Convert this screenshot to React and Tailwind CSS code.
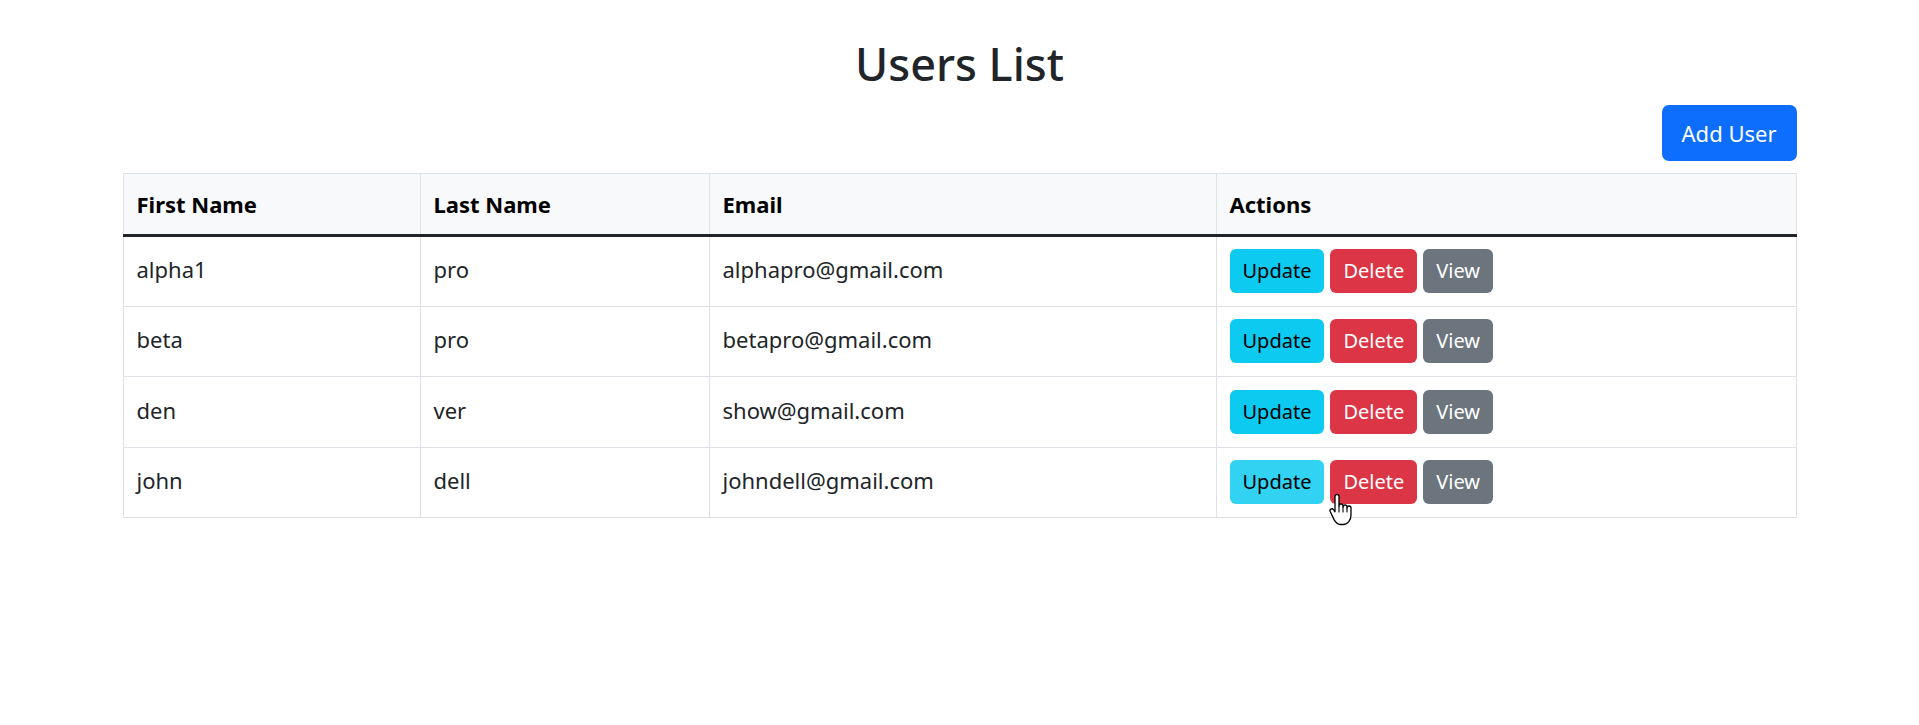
import React from 'react';

const users = [
  { first: 'alpha1', last: 'pro', email: 'alphapro@gmail.com' },
  { first: 'beta', last: 'pro', email: 'betapro@gmail.com' },
  { first: 'den', last: 'ver', email: 'show@gmail.com' },
  { first: 'john', last: 'dell', email: 'johndell@gmail.com' },
];

// the mouse pointer that sits over the last row's Delete button
const HandCursor = () => (
  <svg
    className="absolute left-[-3px] top-[33px] pointer-events-none"
    width="28"
    height="34"
    viewBox="0 0 28 34"
  >
    <path
      d="M10 1.5a2 2 0 0 1 2 2v9.5a2 2 0 0 1 4 0v1a2 2 0 0 1 4 0v1a2 2 0 0 1 4 0v7c0 5-3 9.5-8 9.5h-2.5c-3.2 0-4.8-2-6.3-4.6L3.3 18.8a1.9 1.9 0 0 1 3.2-2.1L8 18.8V3.5a2 2 0 0 1 2-2z"
      fill="white"
      stroke="black"
      strokeWidth="1.3"
      strokeLinejoin="round"
    />
    <path d="M12 13v6M16 14v5M20 15v4" stroke="black" strokeWidth="1.1" strokeLinecap="round" />
  </svg>
);

const Users = () => {
  return (
    <div className="min-h-screen bg-white font-['Noto_Sans',sans-serif] text-[#212529]">
      <div className="w-[1674px] mx-auto pt-[36px]">
        <h2 className="text-center text-[45px] leading-[55px] font-medium text-[#212529]">
          Users List
        </h2>

        <div className="flex justify-end mt-[14px] mb-[12px]">
          <button className="h-[56px] px-[20px] rounded-[7px] bg-[#0d6efd] text-white text-[22px] leading-none">
            Add User
          </button>
        </div>

        <table className="w-full table-fixed border-collapse border border-[#dee2e6]">
          <thead>
            <tr className="bg-[#f8f9fa] h-[62px]">
              <th className="w-[297px] border border-[#dee2e6] border-b-[3px] border-b-[#212529] px-[13px] text-left align-middle text-[22px] font-bold text-black">
                First Name
              </th>
              <th className="w-[289px] border border-[#dee2e6] border-b-[3px] border-b-[#212529] px-[13px] text-left align-middle text-[22px] font-bold text-black">
                Last Name
              </th>
              <th className="w-[507px] border border-[#dee2e6] border-b-[3px] border-b-[#212529] px-[13px] text-left align-middle text-[22px] font-bold text-black">
                Email
              </th>
              <th className="border border-[#dee2e6] border-b-[3px] border-b-[#212529] px-[13px] text-left align-middle text-[22px] font-bold text-black">
                Actions
              </th>
            </tr>
          </thead>
          <tbody>
            {users.map((u, i) => {
              const isLast = i === users.length - 1;
              return (
                <tr key={u.email} className="h-[70.5px]">
                  <td className="border border-[#dee2e6] px-[13px] align-middle text-[22px] pb-[3px]">{u.first}</td>
                  <td className="border border-[#dee2e6] px-[13px] align-middle text-[22px] pb-[3px]">{u.last}</td>
                  <td className="border border-[#dee2e6] px-[13px] align-middle text-[22px] pb-[3px]">{u.email}</td>
                  <td className="border border-[#dee2e6] px-[13px] align-middle">
                    <div className="flex items-center gap-[6px]">
                      <button
                        className={
                          isLast
                            ? 'h-[44px] px-[13px] rounded-[6px] bg-[#31d2f2] text-black text-[20px] leading-none'
                            : 'h-[44px] px-[13px] rounded-[6px] bg-[#0dcaf0] text-black text-[20px] leading-none'
                        }
                      >
                        Update
                      </button>
                      <button className="relative h-[44px] px-[13px] rounded-[6px] bg-[#dc3545] text-white text-[20px] leading-none">
                        Delete
                        {isLast && <HandCursor />}
                      </button>
                      <button className="h-[44px] px-[13px] rounded-[6px] bg-[#6c757d] text-white text-[20px] leading-none">
                        View
                      </button>
                    </div>
                  </td>
                </tr>
              );
            })}
          </tbody>
        </table>
      </div>
    </div>
  );
};

export default function App() {
  return <Users />;
}
